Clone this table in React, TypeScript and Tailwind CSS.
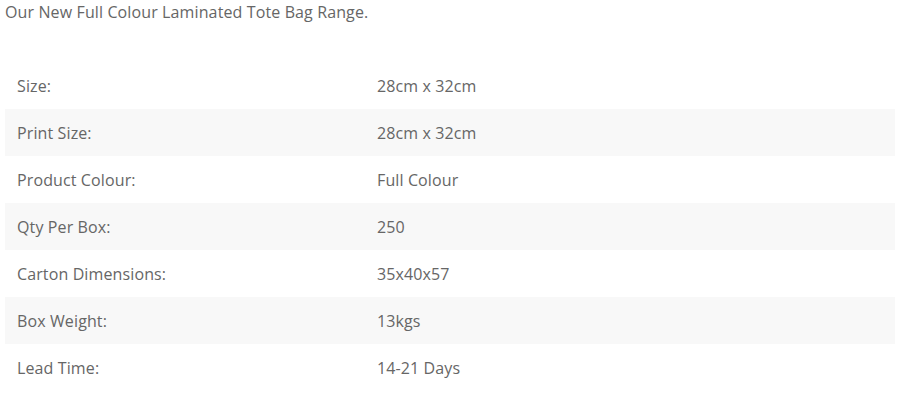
import React from "react";

const rows: [string, string][] = [
  ["Size:", "28cm x 32cm"],
  ["Print Size:", "28cm x 32cm"],
  ["Product Colour:", "Full Colour"],
  ["Qty Per Box:", "250"],
  ["Carton Dimensions:", "35x40x57"],
  ["Box Weight:", "13kgs"],
  ["Lead Time:", "14-21 Days"],
];

export default function App() {
  return (
    <div className="w-[904px] h-[414px] bg-white text-[#666] text-[16px] tracking-[0.12px]" style={{ fontFamily: '"Open Sans", sans-serif' }}>
      <p className="pl-[5px] leading-[24px]">Our New Full Colour Laminated Tote Bag Range.</p>
      <div className="mt-[38px] ml-[5px] w-[890px] flex flex-col">
        {rows.map(([k, v], i) => (
          <div key={k} className={`flex h-[47px] items-center ${i % 2 === 1 ? "bg-[#f8f8f8]" : ""}`}>
            <div className="w-[360px] pl-[12px]">{k}</div>
            <div className="pl-[12px]">{v}</div>
          </div>
        ))}
      </div>
    </div>
  );
}
